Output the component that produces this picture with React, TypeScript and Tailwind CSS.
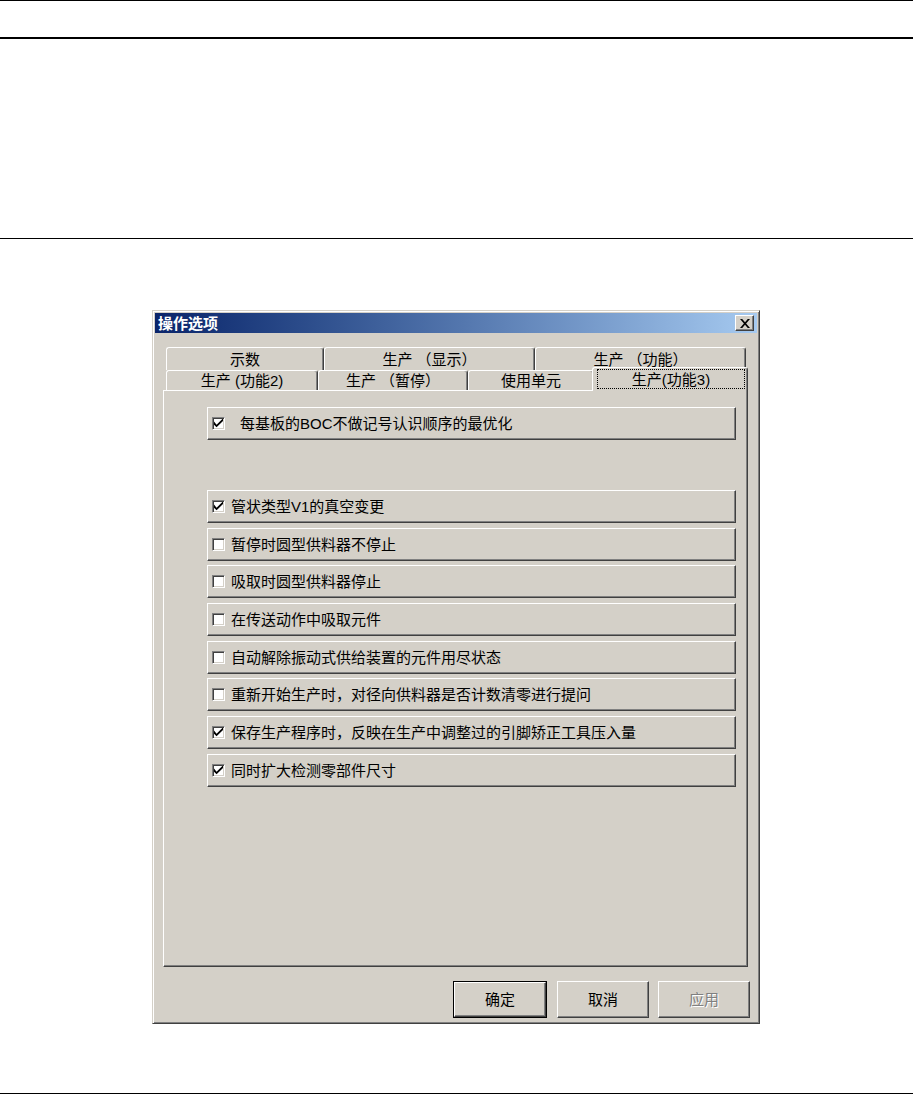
import React from "react";

const FONT = "font-['Liberation_Sans','Noto_Sans_CJK_SC',sans-serif]";

type Option = { label: string; checked: boolean };

const options: Option[] = [
  { label: "管状类型V1的真空变更", checked: true },
  { label: "暂停时圆型供料器不停止", checked: false },
  { label: "吸取时圆型供料器停止", checked: false },
  { label: "在传送动作中吸取元件", checked: false },
  { label: "自动解除振动式供给装置的元件用尽状态", checked: false },
  { label: "重新开始生产时，对径向供料器是否计数清零进行提问", checked: false },
  { label: "保存生产程序时，反映在生产中调整过的引脚矫正工具压入量", checked: true },
  { label: "同时扩大检测零部件尺寸", checked: true },
];

function CheckBox({ checked }: { checked: boolean }) {
  return (
    <div className="w-[13px] h-[13px] shrink-0 bg-white border border-t-[#808080] border-l-[#808080] border-r-white border-b-white shadow-[inset_1px_1px_#404040,inset_-1px_-1px_#d4d0c8] flex items-center justify-center">
      {checked && (
        <svg width="9" height="9" viewBox="0 0 7 7" className="block">
          <path d="M0 2 L0 4.5 L2 6.5 L7 1.5 L7 -0.5 L2 4.5 Z" fill="#000" />
        </svg>
      )}
    </div>
  );
}

function OptionRow({ label, checked, wide }: Option & { wide?: boolean }) {
  return (
    <div className="h-[33px] flex items-center pl-[4px] bg-[#d4d0c8] border border-t-white border-l-white border-r-[#404040] border-b-[#404040] shadow-[inset_-1px_-1px_#808080]">
      <CheckBox checked={checked} />
      <span className={`${wide ? "ml-[15px]" : "ml-[6px]"} text-[15px] leading-none text-black whitespace-nowrap`}>
        {label}
      </span>
    </div>
  );
}

function Tab({ label, width }: { label: string; width: string }) {
  return (
    <div
      className={`${width} h-full flex items-center justify-center bg-[#d4d0c8] border-l border-t border-white rounded-t-[3px] border-r border-r-[#404040] shadow-[inset_-1px_0_#808080] text-[15px] leading-none text-black whitespace-pre`}
    >
      {label}
    </div>
  );
}

function Button({ label, width, isDefault, disabled }: { label: string; width: string; isDefault?: boolean; disabled?: boolean }) {
  return (
    <div className={`${width} h-[37px] ${isDefault ? "border border-black" : ""}`}>
      <div className="w-full h-full flex items-center justify-center bg-[#d4d0c8] border border-t-white border-l-white border-r-[#404040] border-b-[#404040] shadow-[inset_-1px_-1px_#808080]">
        <span
          className={`text-[15px] leading-none ${disabled ? "text-[#808080] [text-shadow:1px_1px_#fff]" : "text-black"}`}
        >
          {label}
        </span>
      </div>
    </div>
  );
}

export default function App() {
  return (
    <div className={`w-[913px] h-[1095px] bg-white flex flex-col ${FONT}`}>
      <div className="h-px bg-black" />
      <div className="h-[36px]" />
      <div className="h-[2px] bg-black" />
      <div className="h-[199px]" />
      <div className="h-px bg-black" />
      <div className="h-[71px]" />

      {/* dialog */}
      <div className="ml-[152px] w-[608px] h-[714px] bg-[#d4d0c8] border border-t-[#d4d0c8] border-l-[#d4d0c8] border-r-[#404040] border-b-[#404040] shadow-[inset_1px_1px_#fff,inset_-1px_-1px_#808080] p-[2px] flex flex-col">
        <div className="h-[20px] flex items-center bg-gradient-to-r from-[#0a246a] to-[#a6caf0] pl-[3px] pr-[3px]">
          <span className="text-white font-bold text-[15px] leading-none">操作选项</span>
          <div className="ml-auto w-[19px] h-[16px] bg-[#d4d0c8] border border-t-white border-l-white border-r-[#404040] border-b-[#404040] shadow-[inset_-1px_-1px_#808080] flex items-center justify-center">
            <svg width="10" height="9" viewBox="0 0 9 8">
              <path d="M0 0 H2 L4.5 2.8 L7 0 H9 L5.5 4 L9 8 H7 L4.5 5.2 L2 8 H0 L3.5 4 Z" fill="#000" />
            </svg>
          </div>
        </div>

        <div className="flex-1 flex flex-col pl-[8px] pr-[9px] pt-[14px]">
          {/* tab strip */}
          <div className="relative z-10 flex flex-col pl-[3px]">
            <div className="h-[23px] flex">
              <Tab label="示数" width="w-[158px]" />
              <Tab label="生产 （显示）" width="w-[211px]" />
              <Tab label="生产 （功能）" width="w-[211px]" />
            </div>
            <div className="h-[20px] flex">
              <Tab label="生产 (功能2)" width="w-[152px]" />
              <Tab label="生产 （暂停）" width="w-[150px]" />
              <Tab label="使用单元" width="w-[126px]" />
              <div className="-ml-[2px] -mt-[3px] w-[156px] h-[24px] bg-[#d4d0c8] border-l border-t border-white rounded-t-[3px] border-r border-r-[#404040] shadow-[inset_-1px_0_#808080] pt-[1px] pl-[4px] pr-[2px] pb-[2px]">
                <div className="h-full flex items-center justify-center border border-dotted border-black text-[15px] leading-none text-black">
                  生产(功能3)
                </div>
              </div>
            </div>
          </div>

          {/* panel */}
          <div className="h-[577px] bg-[#d4d0c8] border border-t-white border-l-white border-r-[#404040] border-b-[#404040] shadow-[inset_-1px_-1px_#808080] pt-[16px] pl-[43px] pr-[11px]">
            <OptionRow label="每基板的BOC不做记号认识顺序的最优化" checked wide />
            <div className="mt-[50px] flex flex-col gap-[4.7px]">
              {options.map((o) => (
                <OptionRow key={o.label} label={o.label} checked={o.checked} />
              ))}
            </div>
          </div>

          {/* buttons */}
          <div className="mt-[14px] flex justify-end -mr-[2px]">
            <Button label="确定" width="w-[94px]" isDefault />
            <div className="w-[10px]" />
            <Button label="取消" width="w-[92px]" />
            <div className="w-[9px]" />
            <Button label="应用" width="w-[92px]" disabled />
          </div>
        </div>
      </div>

      <div className="flex-1" />
      <div className="h-px bg-black mb-[1px]" />
    </div>
  );
}
